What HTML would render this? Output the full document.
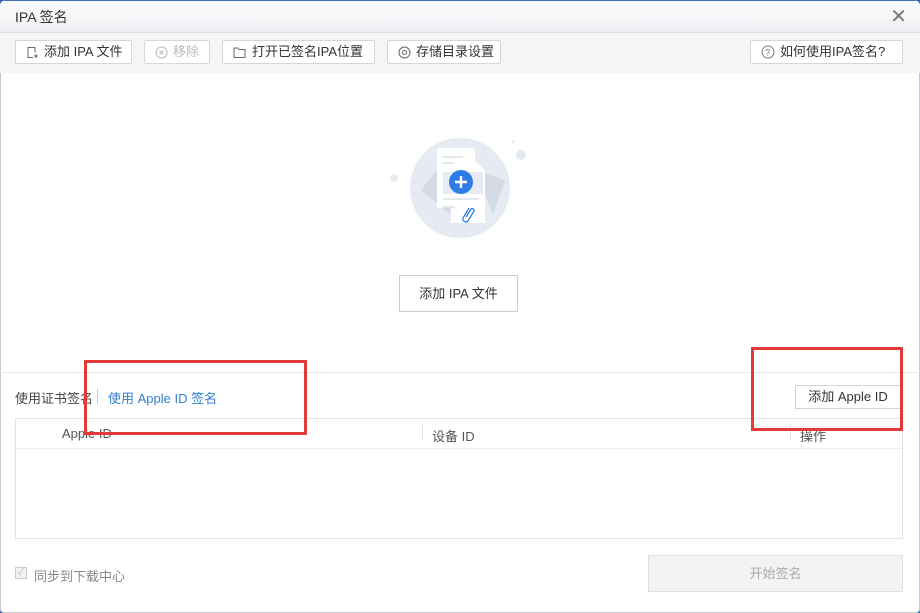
<!DOCTYPE html>
<html><head><meta charset="utf-8"><style>
*{margin:0;padding:0;box-sizing:border-box}
body{width:920px;height:613px;background:#2d5fb0;font-family:"Liberation Sans","Noto Sans CJK SC",sans-serif;font-size:13px;color:#333;position:relative;overflow:hidden}
.win{position:absolute;left:0;top:0;width:920px;height:613px;background:#fff;border-radius:6px 6px 4px 4px;overflow:hidden;box-shadow:inset 0 0 0 1px #c8ccd2}
.title{height:33px;background:linear-gradient(#fbfcfd,#eef0f3);border-bottom:1px solid #dcdfe4;padding-left:15px;line-height:33px;font-size:14px;color:#333;border-top:1px solid #3b6fc4}
.close{position:absolute;right:13px;top:7px;font-size:20px;color:#777;line-height:20px}
.tb{height:40px;background:#f4f5f7;position:relative}
.btn{position:absolute;top:7px;height:24px;border:1px solid #d4d6da;background:#fff;border-radius:2px;font-size:13px;line-height:22px;color:#333;padding-left:10px;white-space:nowrap}
.btn svg{vertical-align:-3px;margin-right:5px}
.dis{color:#bbb}
.big{position:absolute;left:399px;top:275px;width:119px;height:37px;border:1px solid #ccc;background:#fff;text-align:center;line-height:35px;font-size:13px}
.sep{position:absolute;left:0;right:0;top:372px;border-top:1px solid #e8eaed}
.red{position:absolute;border:3px solid #e23a3a}
</style></head><body>
<div class="win">
<div class="title">IPA 签名</div>
<div class="close">✕</div>
<div class="tb">
<div class="btn" style="left:15px;width:117px"><svg width="13" height="13"><path d="M9 1.5H2v10h5M9 1.5v5M8 10h4M10 8v4" stroke="#666" fill="none"/></svg>添加 IPA 文件</div>
<div class="btn dis" style="left:144px;width:66px"><svg width="13" height="13"><circle cx="6.5" cy="6.5" r="5.5" stroke="#bbb" fill="none"/><path d="M4.5 4.5l4 4M8.5 4.5l-4 4" stroke="#bbb"/></svg>移除</div>
<div class="btn" style="left:222px;width:153px"><svg width="14" height="13"><path d="M1 2h4l1 1.5h6v8H1z" stroke="#666" fill="none"/></svg>打开已签名IPA位置</div>
<div class="btn" style="left:387px;width:114px"><svg width="13" height="13"><circle cx="6.5" cy="6.5" r="5.5" stroke="#666" fill="none"/><circle cx="6.5" cy="6.5" r="2" stroke="#666" fill="none"/></svg>存储目录设置</div>
<div class="btn" style="left:750px;width:153px"><svg width="14" height="14"><circle cx="7" cy="7" r="6" stroke="#777" fill="none"/><text x="4.3" y="10.5" font-size="9" fill="#777">?</text></svg>如何使用IPA签名?</div>
</div>
<svg style="position:absolute;left:385px;top:130px" width="150" height="120">
<circle cx="75" cy="58" r="50" fill="#e6ebf3"/>
<circle cx="9" cy="48" r="4" fill="#e8ecf2"/><circle cx="136" cy="25" r="5" fill="#e3e8f0"/><circle cx="128" cy="12" r="1.5" fill="#e3e8f0"/>
<path d="M36 60l20-25 10 50z" fill="#d5dbe5"/><path d="M90 40l30 10-12 35z" fill="#d5dbe5"/>
<rect x="52" y="18" width="38" height="60" rx="2" fill="#fff"/>
<path d="M66 28h20l14 12v53H66z" fill="#fff"/>
<rect x="58" y="26" width="20" height="2" fill="#e3e7ee"/><rect x="58" y="32" width="10" height="2" fill="#e3e7ee"/>
<rect x="58" y="42" width="40" height="22" fill="#e8ecf2"/>
<circle cx="76" cy="52" r="12" fill="#2e7de6"/><path d="M76 46v12M70 52h12" stroke="#fff" stroke-width="2.4"/>
<rect x="58" y="68" width="36" height="2" fill="#e3e7ee"/><rect x="58" y="76" width="12" height="2" fill="#e3e7ee"/>
<path d="M84 78l-6 10a3 3 0 0 0 5 3l6-10a2 2 0 0 0-3-2l-5 8" stroke="#2e7de6" fill="none" stroke-width="1.3"/>
</svg>
<div class="big">添加 IPA 文件</div>
<div class="sep"></div>
<div style="position:absolute;left:15px;top:388px;font-size:13px;color:#444">使用证书签名</div>
<div style="position:absolute;left:97px;top:389px;height:15px;border-left:1px solid #ccc"></div>
<div style="position:absolute;left:108px;top:388px;font-size:13px;color:#2f7fd6">使用 Apple ID 签名</div>
<div style="position:absolute;left:795px;top:385px;width:106px;height:24px;border:1px solid #d0d2d6;text-align:center;line-height:22px;font-size:13px">添加 Apple ID</div>
<div style="position:absolute;left:15px;top:418px;width:888px;height:121px;border:1px solid #e1e3e6"></div>
<div style="position:absolute;left:16px;top:448px;width:886px;border-top:1px solid #eceef0"></div>
<div style="position:absolute;left:62px;top:426px;color:#555">Apple ID</div>
<div style="position:absolute;left:422px;top:424px;height:16px;border-left:1px solid #e6e6e6"></div>
<div style="position:absolute;left:432px;top:426px;color:#555">设备 ID</div>
<div style="position:absolute;left:790px;top:424px;height:16px;border-left:1px solid #e6e6e6"></div>
<div style="position:absolute;left:800px;top:426px;color:#555">操作</div>
<div class="red" style="left:84px;top:360px;width:223px;height:75px"></div>
<div class="red" style="left:751px;top:347px;width:152px;height:84px"></div>
<div style="position:absolute;left:15px;top:567px;width:12px;height:12px;border:1px solid #ccc;background:#f3f3f3;font-size:10px;color:#bbb;line-height:10px;text-align:center">✓</div>
<div style="position:absolute;left:34px;top:566px;color:#888">同步到下载中心</div>
<div style="position:absolute;left:648px;top:555px;width:255px;height:37px;border:1px solid #dcdfe3;background:#f2f3f5;text-align:center;line-height:35px;color:#aaa">开始签名</div>
</div>
</body></html>
